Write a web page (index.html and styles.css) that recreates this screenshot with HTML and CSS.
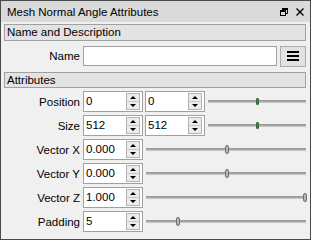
FILE: index.html
```html
<!DOCTYPE html>
<html>
<head>
<meta charset="utf-8">
<link rel="stylesheet" href="styles.css">
</head>
<body>
<div class="panel">
  <div class="titlebar">
    <span class="title">Mesh Normal Angle Attributes</span>
    <span class="tb-icons">
      <svg class="tb-float" width="8" height="8" viewBox="0 0 8 8"><path d="M2.5 0.5h5v5h-2M2.5 0.5v2" fill="none" stroke="#000" stroke-width="1"/><rect x="0.5" y="2.5" width="5" height="5" fill="none" stroke="#000"/><rect x="0" y="2" width="6" height="2" fill="#000"/><rect x="2" y="0" width="6" height="2" fill="#000"/></svg>
      <svg class="tb-close" width="8" height="8" viewBox="0 0 8 8"><path d="M0.5 0.5l7 7M7.5 0.5l-7 7" stroke="#000" stroke-width="1.4"/></svg>
    </span>
  </div>
  <div class="content">
    <div class="section-header">Name and Description</div>
    <div class="name-row">
      <label class="lbl">Name</label>
      <input class="text-input" type="text" value="">
      <button class="menu-btn"><span></span><span></span><span></span></button>
    </div>
    <div class="section-header attr">Attributes</div>
    <div class="grid">
      <label class="lbl">Position</label>
      <div class="fields">
        <div class="spin"><span class="val">0</span><span class="arrows"><i class="up"></i><i class="dn"></i></span></div>
        <div class="spin"><span class="val">0</span><span class="arrows"><i class="up"></i><i class="dn"></i></span></div>
        <div class="slider"><div class="track"></div><div class="handle green" style="left:49%"></div></div>
      </div>
      <label class="lbl">Size</label>
      <div class="fields">
        <div class="spin"><span class="val">512</span><span class="arrows"><i class="up"></i><i class="dn"></i></span></div>
        <div class="spin"><span class="val">512</span><span class="arrows"><i class="up"></i><i class="dn"></i></span></div>
        <div class="slider"><div class="track"></div><div class="handle green" style="left:49%"></div></div>
      </div>
      <label class="lbl">Vector X</label>
      <div class="fields">
        <div class="spin"><span class="val">0.000</span><span class="arrows"><i class="up"></i><i class="dn"></i></span></div>
        <div class="slider"><div class="track"></div><div class="handle" style="left:49.5%"></div></div>
      </div>
      <label class="lbl">Vector Y</label>
      <div class="fields">
        <div class="spin"><span class="val">0.000</span><span class="arrows"><i class="up"></i><i class="dn"></i></span></div>
        <div class="slider"><div class="track"></div><div class="handle" style="left:49.5%"></div></div>
      </div>
      <label class="lbl">Vector Z</label>
      <div class="fields">
        <div class="spin"><span class="val">1.000</span><span class="arrows"><i class="up"></i><i class="dn"></i></span></div>
        <div class="slider"><div class="track"></div><div class="handle" style="left:98%"></div></div>
      </div>
      <label class="lbl">Padding</label>
      <div class="fields">
        <div class="spin"><span class="val">5</span><span class="arrows"><i class="up"></i><i class="dn"></i></span></div>
        <div class="slider"><div class="track"></div><div class="handle" style="left:18.5%"></div></div>
      </div>
    </div>
  </div>
</div>
</body>
</html>
```
FILE: styles.css
```css
* { box-sizing: border-box; }
html, body { margin: 0; padding: 0; background: #f0f0f0; }
body {
  font-family: "Liberation Sans", Arial, sans-serif;
  font-size: 11px;
  color: #000;
}
.panel {
  width: 311px;
  height: 240px;
  border: 1px solid #4a4a4a;
  background: #f0f0f0;
}
.titlebar {
  height: 21px;
  background: #dadada;
  display: flex;
  align-items: center;
  justify-content: space-between;
  padding: 1px 6px 0 6px;
  font-size: 11.5px;
}
.tb-icons { display: flex; align-items: center; gap: 8px; padding-right: 0; }
.tb-float, .tb-close { display: block; }
.content { padding: 2px 4px 0 3px; }
.section-header {
  height: 17px;
  border: 1px solid #a0a0a0;
  background: #e3e3e3;
  padding-left: 2px;
  line-height: 15px;
  font-size: 11.5px;
}
.section-header.attr { margin-top: 5px; height: 16px; line-height: 14px; }
.name-row {
  display: grid;
  grid-template-columns: 76px 1fr 26px;
  column-gap: 3px;
  align-items: center;
  height: 22px;
  margin-top: 4px;
}
.lbl {
  text-align: right;
  font-size: 11.5px;
  white-space: nowrap;
}
.text-input {
  height: 20px;
  border: 1px solid #a0a0a0;
  background: #fff;
  margin: 0;
  padding: 0 3px;
  font: inherit;
  width: 100%;
}
.menu-btn {
  width: 26px;
  height: 21px;
  border: 1px solid #adadad;
  background: #e1e1e1;
  margin: 0;
  padding: 0;
  display: flex;
  flex-direction: column;
  align-items: center;
  justify-content: center;
  gap: 2px;
}
.menu-btn span { display: block; width: 12px; height: 2px; background: #000; }
.grid {
  display: grid;
  grid-template-columns: 76px 1fr;
  column-gap: 3px;
  row-gap: 3px;
  grid-auto-rows: 21px;
  margin-top: 3px;
  align-items: center;
}
.fields {
  display: flex;
  align-items: center;
  gap: 2px;
  height: 21px;
}
.spin {
  width: 60px;
  height: 21px;
  flex: none;
  border: 1px solid #a0a0a0;
  background: #fff;
  display: flex;
  align-items: stretch;
  font-size: 11.5px;
}
.spin .val { flex: 1; padding-left: 2px; line-height: 19px; }
.arrows {
  width: 14px;
  margin: 1px 2px 1px 0;
  border: 1px solid #b4b4b4;
  background: #ececec;
  display: flex;
  flex-direction: column;
}
.arrows i {
  flex: 1;
  display: flex;
  align-items: center;
  justify-content: center;
}
.arrows i.up { border-bottom: 1px solid #c8c8c8; }
.arrows i::before {
  content: "";
  width: 0; height: 0;
  border-left: 3px solid transparent;
  border-right: 3px solid transparent;
}
.arrows i.up::before { border-bottom: 3px solid #000; }
.arrows i.dn::before { border-top: 3px solid #000; }
.slider {
  flex: 1;
  position: relative;
  height: 21px;
  margin-left: 1px;
}
.track {
  position: absolute;
  left: 0; right: 0;
  top: 9px;
  height: 3px;
  background: #a8a8a8;
  border-top: 1px solid #9a9a9a;
  border-bottom: 1px solid #c4c4c4;
}
.handle {
  position: absolute;
  top: 6px;
  height: 9px;
  border-radius: 2px;
  background: #b8b8b8;
  border: 1px solid #707070;
  width: 4px;
}
.handle.green { top: 7px; height: 7px; background: #1f9a1f; border: 1px solid #3c6a3c; width: 3px; border-radius: 1px; }
```
